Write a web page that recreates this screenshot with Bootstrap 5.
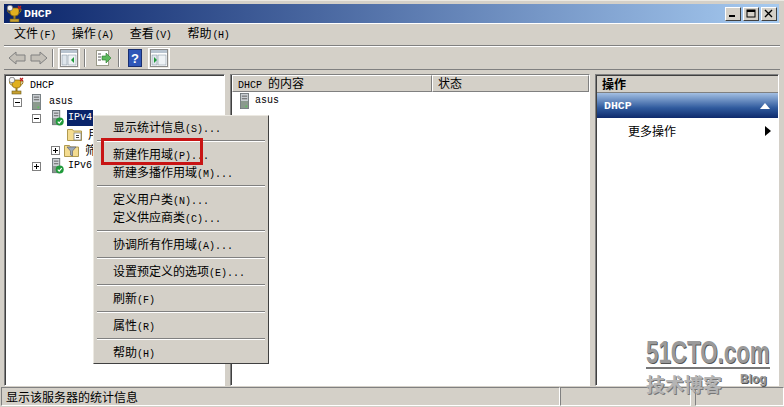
<!DOCTYPE html>
<html lang="zh">
<head>
<meta charset="UTF-8">
<title>DHCP</title>
<link rel="stylesheet" href="https://cdn.jsdelivr.net/npm/bootstrap@5.3.0/dist/css/bootstrap.min.css">
<style>
  html, body { width: 784px; height: 407px; overflow: hidden; }
  body { background: #d4d0c8; color: #000; font: 12px/16px "Noto Sans CJK SC", sans-serif; position: relative; }
  .la { font: 10px/16px "Liberation Mono", monospace; }
  .win-frame { height: 407px; padding: 3px 4px 0 4px; border-top: 1px solid #ece9e2; }
  .title-strip { height: 19px; margin: 0 1px 0 0; background: linear-gradient(90deg, #0a246a, #a6caf0); color: #fff; padding-left: 1px; }
  .title-text { font: bold 11.5px/19px "Liberation Mono", monospace; margin-left: 1px; }
  .cap-btn { width: 16px; height: 14px; background: #d4d0c8; margin-left: 2px; border: 1px solid; border-color: #fff #404040 #404040 #fff; display: flex; align-items: center; justify-content: center; }
  .cap-btns { margin-right: 2px; }
  .menu-strip { height: 23px; border-top: 1px solid #fff; border-bottom: 1px solid #808080; padding-left: 10px; gap: 16px; align-items: center; }
  .menu-strip .la { margin-left: 1px; letter-spacing: -.4px; }
  .tool-strip { height: 24px; border-top: 1px solid #fff; border-bottom: 1px solid #808080; padding-left: 4px; align-items: center; }
  .tool-sep { width: 2px; height: 18px; border-left: 1px solid #808080; border-right: 1px solid #fff; margin: 0 4px; }
  .tool-on { width: 22px; height: 21px; background: #ece9e2; border: 1px solid #fff; display: flex; align-items: center; justify-content: center; }
  .tool-gap { margin-left: 6px; }
  .tool-gap-b { margin-right: 8px; }
  .pane-row { height: 312px; margin-top: 4px; gap: 5px; }
  .pane-box { background: #fff; border: 1px solid; border-color: #808080 #fff #fff #808080; box-shadow: inset 1px 1px 0 #404040; }
  .pane-tree { width: 221px; padding: 3px 0 0 3px; }
  .pane-mid { width: 360px; padding: 0 0 0 1px; }
  .pane-act { flex: 1; padding: 1px 0 0 1px; margin-right: 1px; }
  .tree-row { height: 16px; display: flex; align-items: center; }
  .tree-row svg { flex: none; }
  .lv1 { padding-left: 5px; }
  .lv2 { padding-left: 24px; }
  .lv3 { padding-left: 43px; }
  .txt-gap { margin-left: 6px; }
  .tree-sel { background: #0a246a; color: #fff; padding: 0 1px; margin-left: 3px; }
  .tog { width: 9px; height: 9px; border: 1px solid #808080; margin-right: 10px; position: relative; flex: none; background: #fff; }
  .tog::before { content: ""; position: absolute; left: 1px; top: 3px; width: 5px; height: 1px; background: #000; }
  .tog-plus::after { content: ""; position: absolute; left: 3px; top: 1px; width: 1px; height: 5px; background: #000; }
  .col-head { height: 17px; background: #d4d0c8; border: 1px solid; border-color: #fff #808080 #808080 #fff; padding-left: 5px; line-height: 14px; }
  .head-a { width: 200px; }
  .asus-row { padding-left: 8px; margin-top: 1px; }
  .act-title { height: 17px; padding: 0 0 0 5px; font-weight: 700; background: #d4d0c8; border-bottom: 1px solid #808080; line-height: 16px; }
  .act-band { height: 25px; background: linear-gradient(#a3bfe3, #2f5a9d 60%, #0e2a6c); color: #fff; padding: 0 8px 0 7px; font: bold 11.5px/24px "Liberation Mono", monospace; align-items: center; justify-content: space-between; }
  .act-row { padding: 2px 7px 0 31px; height: 24px; line-height: 18px; align-items: center; justify-content: space-between; }
  .stat-strip { height: 20px; margin: 1px -4px 0 -3px; }
  .stat-cell { border: 1px solid; border-color: #808080 #fff #fff #808080; height: 19px; line-height: 18px; padding-left: 4px; }
  .pop-menu { position: absolute; left: 93px; top: 115px; width: 176px; height: 249px; background: #d4d0c8; border: 1px solid; border-color: #ece9e2 #404040 #404040 #ece9e2; padding: 2px 2px 0 2px; }
  .pop-item { height: 18px; line-height: 18px; padding-left: 17px; }
  .pop-sep { height: 2px; margin: 3.5px 1px; border-top: 1px solid #808080; border-bottom: 1px solid #fff; }
  .red-mark { position: absolute; left: 101px; top: 138px; width: 102px; height: 27px; border: 3px solid #c81414; }
  .wm-main { position: absolute; left: 646px; top: 338px; font: bold 31px/30px "Liberation Sans", sans-serif; color: #9a9a9a; text-shadow: 1px 1px 0 #555; transform: scaleX(.72); transform-origin: left top; white-space: nowrap; }
  .wm-line { position: absolute; left: 646px; top: 367px; width: 124px; height: 2px; background: #777; }
  .wm-cn { position: absolute; left: 646px; top: 374px; font: bold 19px/20px "Noto Sans CJK SC", sans-serif; color: #b4b4b4; text-shadow: 1px 1px 0 #777; white-space: nowrap; }
  .wm-blog { position: absolute; left: 740px; top: 372px; font: bold 12px/15px "Liberation Sans", sans-serif; color: #999; text-shadow: 1px 1px 0 #555; }
</style>
</head>
<body>
<svg width="0" height="0" class="position-absolute">
  <defs>
    <symbol id="srv" viewBox="0 0 10 18">
      <rect x="0.5" y="0.5" width="9" height="17" fill="#c9ced2" stroke="#6c7478"/>
      <rect x="2" y="3" width="6" height="1" fill="#555"/>
      <rect x="2" y="6" width="6" height="1" fill="#555"/>
      <rect x="1" y="9" width="8" height="8" fill="#8b9a8e"/>
      <rect x="6" y="14" width="2" height="2" fill="#5fbf5f"/>
    </symbol>
    <symbol id="srvok" viewBox="0 0 14 18">
      <rect x="1.5" y="0.5" width="8" height="16" fill="#d0d4d8" stroke="#5e666a"/>
      <rect x="3" y="3" width="5" height="1" fill="#555"/>
      <rect x="3" y="6" width="5" height="1" fill="#555"/>
      <rect x="2" y="9" width="7" height="7" fill="#8a9690"/>
      <circle cx="9.5" cy="13" r="4.5" fill="#1f9a3a"/>
      <path d="M7.3 13l1.6 1.7 2.8-3.2" fill="none" stroke="#fff" stroke-width="1.3"/>
    </symbol>
    <symbol id="cup" viewBox="0 0 16 18">
      <path d="M4 3h9v4c0 3-2 4-4.500 4S4 10 4 7z" fill="#e0b020" stroke="#7a5a10" stroke-width=".7"/>
      <path d="M4 4H1.500c0 3 1 4 3 4M13 4h2c0 3-1 4-3 4" fill="none" stroke="#9a7a10"/>
      <rect x="7.500" y="11" width="2" height="3" fill="#a08018"/>
      <rect x="4" y="14" width="9" height="3" fill="#c8a030" stroke="#6a5a20" stroke-width=".6"/>
      <circle cx="4" cy="3" r="2.800" fill="#f4f4f4" stroke="#666" stroke-width=".7"/>
      <path d="M12 1l3 3M15 1l-3 3" stroke="#c02020" stroke-width="1.200"/>
    </symbol>
    <symbol id="fold" viewBox="0 0 15 14">
      <path d="M.5 2.500h5l1 1.500h8v9.500H.5z" fill="#f4dc90" stroke="#b09a50"/>
      <rect x="7" y="6" width="7" height="7" fill="#fff" stroke="#777" stroke-width=".7"/>
      <rect x="9" y="8" width="3" height="1" fill="#444"/>
      <rect x="9" y="10" width="3" height="1" fill="#444"/>
    </symbol>
    <symbol id="funnel" viewBox="0 0 15 14">
      <path d="M.5 2.500h5l1 1.500h8v9.500H.5z" fill="#f4dc90" stroke="#b09a50"/>
      <path d="M3 4h9L8.500 8v5l-2-1V8z" fill="#9aa8b8" stroke="#556" stroke-width=".6"/>
    </symbol>
    <symbol id="pane-ic" viewBox="0 0 18 18">
      <rect x=".5" y=".5" width="17" height="17" fill="#fff" stroke="#8a8a8a"/>
      <rect x="1" y="1" width="16" height="3" fill="#b8c4d0"/>
      <rect x="2" y="6" width="5" height="10" fill="#dfe6ec" stroke="#7a8a9a" stroke-width=".5"/>
      <rect x="8" y="6" width="8" height="10" fill="#eef2f5" stroke="#7a8a9a" stroke-width=".5"/>
    </symbol>
  </defs>
</svg>

<div class="win-frame d-flex flex-column">
  <div class="title-strip d-flex align-items-center justify-content-between">
    <div class="d-flex align-items-center">
      <svg width="18" height="18"><use href="#cup"/></svg>
      <span class="title-text">DHCP</span>
    </div>
    <div class="cap-btns d-flex">
      <div class="cap-btn"><svg width="10" height="9"><rect x="1" y="6" width="6" height="2" fill="#000"/></svg></div>
      <div class="cap-btn"><svg width="10" height="9"><rect x="1" y="1" width="8" height="7" fill="none" stroke="#000"/><rect x="1" y="1" width="8" height="2" fill="#000"/></svg></div>
      <div class="cap-btn"><svg width="10" height="9"><path d="M1 1l7 7M8 1l-7 7" stroke="#000" stroke-width="1.400"/></svg></div>
    </div>
  </div>

  <div class="menu-strip d-flex">
    <span>文件<span class="la">(F)</span></span>
    <span>操作<span class="la">(A)</span></span>
    <span>查看<span class="la">(V)</span></span>
    <span>帮助<span class="la">(H)</span></span>
  </div>

  <div class="tool-strip d-flex">
    <svg width="18" height="14" class="me-1"><path d="M1 7l7-6v3h9v6H8v3z" fill="#c4c0b8" stroke="#808080"/></svg>
    <svg width="18" height="14"><path d="M17 7l-7-6v3H1v6h9v3z" fill="#c4c0b8" stroke="#808080"/></svg>
    <div class="tool-sep"></div>
    <div class="tool-on"><svg width="18" height="18"><use href="#pane-ic"/><path d="M14 8l-3 3 3 3z" fill="#1f9a3a"/></svg></div>
    <div class="tool-sep"></div>
    <svg width="18" height="18" class="ms-1"><rect x="2.500" y="1.500" width="12" height="15" fill="#fff" stroke="#9a9a8a"/><path d="M4 5h3M4 8h3M4 11h3" stroke="#555"/><path d="M8 7h4V4l5 5-5 5v-3H8z" fill="#5cb85c" stroke="#2a7a2a" stroke-width=".6"/></svg>
    <div class="tool-sep tool-gap tool-gap-b"></div>
    <svg width="14" height="18"><rect x=".5" y=".5" width="13" height="17" fill="#2f57b8" stroke="#1a2f70"/><text x="3" y="14" fill="#fff" font-family="Liberation Sans" font-weight="700" font-size="13">?</text></svg>
    <div class="tool-on tool-gap"><svg width="18" height="18"><use href="#pane-ic"/><path d="M4 8l3 3-3 3z" fill="#1f9a3a"/></svg></div>
  </div>

  <div class="pane-row d-flex">
    <div class="pane-box pane-tree">
      <div class="tree-row"><svg width="16" height="18"><use href="#cup"/></svg><span class="la txt-gap">DHCP</span></div>
      <div class="tree-row lv1"><div class="tog"></div><svg width="9" height="16" class="me-2"><use href="#srv"/></svg><span class="la">asus</span></div>
      <div class="tree-row lv2"><div class="tog"></div><svg width="13" height="16"><use href="#srvok"/></svg><span class="la tree-sel">IPv4</span></div>
      <div class="tree-row lv3"><svg width="15" height="14" class="ms-3"><use href="#fold"/></svg><span class="txt-gap">用</span></div>
      <div class="tree-row lv3"><div class="tog tog-plus me-1"></div><svg width="15" height="14"><use href="#funnel"/></svg><span class="txt-gap">筛</span></div>
      <div class="tree-row lv2"><div class="tog tog-plus"></div><svg width="13" height="16"><use href="#srvok"/></svg><span class="la ms-1">IPv6</span></div>
    </div>

    <div class="pane-box pane-mid">
      <div class="d-flex">
        <div class="col-head head-a"><span class="la">DHCP </span>的内容</div>
        <div class="col-head flex-fill">状态</div>
      </div>
      <div class="tree-row asus-row"><svg width="9" height="16"><use href="#srv"/></svg><span class="la txt-gap">asus</span></div>
    </div>

    <div class="pane-box pane-act">
      <div class="act-title">操作</div>
      <div class="act-band d-flex"><span>DHCP</span><svg width="10" height="6"><path d="M5 0l5 6H0z" fill="#fff"/></svg></div>
      <div class="act-row d-flex"><span>更多操作</span><svg width="6" height="10"><path d="M0 0l6 5-6 5z" fill="#000"/></svg></div>
    </div>
  </div>

  <div class="stat-strip d-flex">
    <div class="stat-cell" style="width:559px">显示该服务器的统计信息</div>
    <div class="stat-cell" style="width:131px"></div>
    <div class="stat-cell flex-fill ms-1"></div>
  </div>
</div>

<div class="wm-main">51CTO.com</div>
<div class="wm-line"></div>
<div class="wm-cn">技术博客</div>
<div class="wm-blog">Blog</div>

<div class="pop-menu">
  <div class="pop-item">显示统计信息<span class="la">(S)...</span></div>
  <div class="pop-sep"></div>
  <div class="pop-item">新建作用域<span class="la">(P)...</span></div>
  <div class="pop-item">新建多播作用域<span class="la">(M)...</span></div>
  <div class="pop-sep"></div>
  <div class="pop-item">定义用户类<span class="la">(N)...</span></div>
  <div class="pop-item">定义供应商类<span class="la">(C)...</span></div>
  <div class="pop-sep"></div>
  <div class="pop-item">协调所有作用域<span class="la">(A)...</span></div>
  <div class="pop-sep"></div>
  <div class="pop-item">设置预定义的选项<span class="la">(E)...</span></div>
  <div class="pop-sep"></div>
  <div class="pop-item">刷新<span class="la">(F)</span></div>
  <div class="pop-sep"></div>
  <div class="pop-item">属性<span class="la">(R)</span></div>
  <div class="pop-sep"></div>
  <div class="pop-item">帮助<span class="la">(H)</span></div>
</div>
<div class="red-mark"></div>

<script src="https://cdn.jsdelivr.net/npm/bootstrap@5.3.0/dist/js/bootstrap.bundle.min.js"></script>
</body>
</html>
